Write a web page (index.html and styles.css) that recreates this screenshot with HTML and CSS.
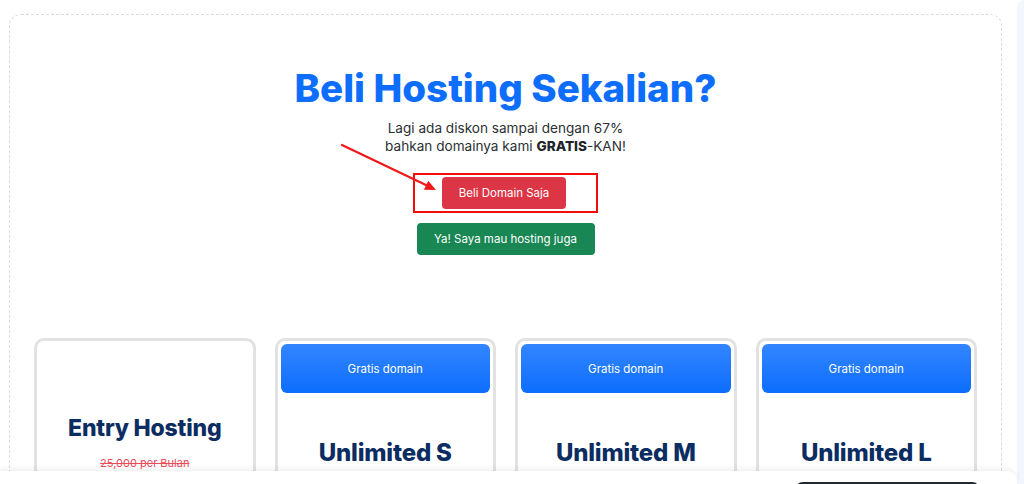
FILE: index.html
```html
<!DOCTYPE html>
<html lang="id">
<head>
<meta charset="utf-8">
<title>Beli Hosting Sekalian?</title>
<link rel="stylesheet" href="styles.css">
</head>
<body>
<div class="page">
  <main class="main">
    <section class="box">
      <div class="hero">
        <h1 class="title">Beli Hosting Sekalian?</h1>
        <p class="lead">Lagi ada diskon sampai dengan 67%<br>bahkan domainya kami <b>GRATIS</b>-KAN!</p>
        <div class="highlight"><a class="btn btn-red">Beli Domain Saja</a></div>
        <a class="btn btn-green">Ya! Saya mau hosting juga</a>
      </div>
      <div class="cards">
        <div class="card">
          <div class="card-body card-body-plain">
            <h2 class="plan plan-sm">Entry Hosting</h2>
            <p class="price-old">25,000 per Bulan</p>
          </div>
        </div>
        <div class="card">
          <div class="badge">Gratis domain</div>
          <div class="card-body">
            <h2 class="plan">Unlimited S</h2>
          </div>
        </div>
        <div class="card">
          <div class="badge">Gratis domain</div>
          <div class="card-body">
            <h2 class="plan">Unlimited M</h2>
          </div>
        </div>
        <div class="card">
          <div class="badge">Gratis domain</div>
          <div class="card-body">
            <h2 class="plan">Unlimited L</h2>
          </div>
        </div>
      </div>
    </section>
  </main>
  <aside class="side"></aside>
</div>
<svg class="arrow" width="102" height="54" viewBox="0 0 102 54" aria-hidden="true">
  <line x1="4" y1="5" x2="89" y2="45.5" stroke="#f01818" stroke-width="2.2" stroke-linecap="round"/>
  <polygon points="98,50 85.9,49.8 90.3,40.7" fill="#f01818"/>
</svg>
<div class="bottom-bar"><div class="dark-btn"></div></div>
</body>
</html>
```
FILE: styles.css
```css
* { box-sizing: border-box; }
html, body { margin: 0; padding: 0; }
body {
  background: #ffffff;
  font-family: "Inter", "Open Sans", sans-serif;
  color: #212529;
  overflow: hidden;
  height: 484px;
}
.page {
  display: flex;
  width: 1024px;
  height: 484px;
}
.main {
  width: 1017px;
  padding: 14px 15px 0 9px;
}
.side {
  flex: 1;
  background: #f2f7fd;
  border-top-left-radius: 8px;
}
.box {
  border: 1px dashed #dcdcdc;
  border-radius: 12px;
  min-height: 600px;
  padding: 50px 24px 0 24px;
}
.hero {
  display: flex;
  flex-direction: column;
  align-items: center;
  text-align: center;
}
.title {
  margin: 0;
  font-size: 38.5px;
  line-height: 46px;
  font-weight: 800;
  color: #0d6efd;
  letter-spacing: 0;
}
.lead {
  margin: 8px 0 0 0;
  font-size: 13.6px;
  line-height: 18px;
  color: #2b2f33;
}
.lead b { font-weight: 800; color: #212529; }
.highlight {
  margin-top: 18px;
  border: 2px solid #f20d0d;
  padding: 2px 30px 2px 27px;
  display: flex;
}
.btn {
  display: inline-flex;
  align-items: center;
  justify-content: center;
  height: 32px;
  border-radius: 4px;
  color: #ffffff;
  font-size: 11.5px;
  text-decoration: none;
}
.btn-red {
  width: 124px;
  background: #dc3545;
}
.btn-green {
  margin-top: 10px;
  width: 178px;
  background: #198754;
}
.cards {
  margin-top: 83px;
  display: grid;
  grid-template-columns: repeat(4, 1fr);
  gap: 19px;
}
.card {
  border: 3px solid #e2e2e2;
  border-radius: 10px;
  padding: 3px;
  height: 200px;
  display: flex;
  flex-direction: column;
}
.badge {
  height: 49px;
  border-radius: 6px;
  background: linear-gradient(180deg, #3385ff 0%, #0d6efd 100%);
  color: #ffffff;
  font-size: 11.5px;
  display: flex;
  align-items: center;
  justify-content: center;
}
.card-body {
  padding-top: 45px;
  text-align: center;
}
.card-body-plain { padding-top: 69px; }
.plan {
  margin: 0;
  font-size: 24px;
  line-height: 30px;
  font-weight: 800;
  color: #0b2d62;
  letter-spacing: -0.2px;
}
.plan-sm { font-size: 23px; }
.price-old {
  margin: 13px 0 0 0;
  font-size: 11px;
  line-height: 14px;
  color: #ea4d5a;
  text-decoration: line-through;
}
.arrow {
  position: absolute;
  left: 338px;
  top: 140px;
}
.bottom-bar {
  position: fixed;
  left: 0;
  bottom: 0;
  width: 1017px;
  height: 13px;
  background: #ffffff;
  border-top-right-radius: 10px;
  box-shadow: 0 -2px 6px rgba(0, 0, 0, 0.07);
  display: flex;
  justify-content: flex-end;
  padding-right: 37px;
  padding-top: 11px;
}
.dark-btn {
  width: 185px;
  height: 10px;
  background: #232833;
  border-radius: 8px 8px 0 0;
}
```
